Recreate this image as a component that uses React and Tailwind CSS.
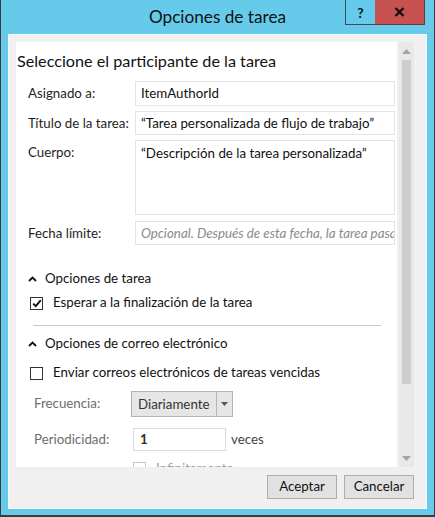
import React from 'react';

const font = { fontFamily: '"Lato", "Noto Sans", sans-serif' };

function Caret() {
  return (
    <svg width="9" height="6" viewBox="0 0 9 6" className="shrink-0">
      <path d="M1 5 L4.5 1.5 L8 5" fill="none" stroke="#111" strokeWidth="1.8" />
    </svg>
  );
}

function Check({ checked, dim }) {
  return (
    <span
      className={`w-[13px] h-[13px] border flex items-center justify-center bg-white shrink-0 ${
        dim ? 'border-[#c8c8c8]' : 'border-[#333333]'
      }`}
    >
      {checked && (
        <svg width="10" height="9" viewBox="0 0 10 9">
          <path d="M1.2 4.6 L3.8 7.2 L8.8 1.2" fill="none" stroke="#111" strokeWidth="1.9" />
        </svg>
      )}
    </span>
  );
}

function Field({ label, children, h = 'h-[25px]' }) {
  return (
    <div className={`flex ${h}`}>
      <div className="w-[119px] pl-[12px] text-[13.3px] text-[#1e1e1e] leading-[25px]">{label}</div>
      {children}
    </div>
  );
}

export default function App() {
  return (
    <div
      className="w-[435px] h-[517px] bg-[#66cbeb] border-x border-b-2 border-[#3c3c3c] flex flex-col relative overflow-hidden"
      style={font}
    >
      {/* title bar */}
      <div className="h-[34px] shrink-0 flex items-center justify-center text-[17.2px] text-[#111] pb-[1px]">
        Opciones de tarea
      </div>
      <div className="absolute top-0 right-[9px] flex">
        <div className="w-[30px] h-[25px] border-l border-b border-[#3a4d57] flex items-center justify-center text-[14px] font-bold text-[#111]">
          ?
        </div>
        <div className="w-[50px] h-[25px] bg-[#c75050] border-b border-r border-[#6e3535] flex items-center justify-center">
          <svg width="11" height="10" viewBox="0 0 11 10">
            <path d="M1.5 1 L9.5 9 M9.5 1 L1.5 9" stroke="#111" strokeWidth="2.4" />
          </svg>
        </div>
      </div>

      {/* dialog body */}
      <div className="mx-[7px] mb-[6px] flex-1 bg-[#f0f0f0] border border-[#fafafa] flex flex-col px-[7px] pt-[7px]">
        <div className="flex h-[425px]">
          <div className="flex-1 bg-white overflow-hidden text-[13.3px]">
            <div className="pl-[1px] pt-[9px] text-[16.2px] text-[#111] leading-[20px]">
              Seleccione el participante de la tarea
            </div>
            <div className="pr-[2px] mt-[10px] flex flex-col gap-[5px]">
              <Field label="Asignado a:">
                <div className="flex-1 border border-[#e3e3e3] px-[5px] leading-[23px] text-[#111]">
                  ItemAuthorId
                </div>
              </Field>
              <Field label="Título de la tarea:" h="h-[24px]">
                <div className="flex-1 border border-[#e3e3e3] px-[5px] leading-[22px] text-[#111] whitespace-nowrap overflow-hidden">
                  “Tarea personalizada de flujo de trabajo”
                </div>
              </Field>
              <Field label="Cuerpo:" h="h-[75px]">
                <div className="flex-1 border border-[#e3e3e3] px-[5px] pt-[1px] leading-[22px] text-[#111] whitespace-nowrap overflow-hidden">
                  “Descripción de la tarea personalizada”
                </div>
              </Field>
              <div className="mt-[1px]">
                <Field label="Fecha límite:" h="h-[24px]">
                  <div className="flex-1 border border-[#e3e3e3] px-[5px] italic leading-[22px] text-[#8a8a8a] whitespace-nowrap overflow-hidden">
                    Opcional. Después de esta fecha, la tarea pasará a estar vencida
                  </div>
                </Field>
              </div>
            </div>

            <div className="mt-[24px] h-[20px] pl-[12px] flex items-center gap-[8px] text-[#111]">
              <Caret />
              <span>Opciones de tarea</span>
            </div>
            <div className="mt-[4px] h-[20px] pl-[14px] flex items-center gap-[10px] text-[#111]">
              <Check checked />
              <span>Esperar a la finalización de la tarea</span>
            </div>
            <div className="ml-[17px] mr-[16px] mt-[12px] border-t border-[#c8c8c8]" />
            <div className="mt-[8px] h-[20px] pl-[12px] flex items-center gap-[8px] text-[#111]">
              <Caret />
              <span>Opciones de correo electrónico</span>
            </div>
            <div className="mt-[9px] h-[20px] pl-[14px] flex items-center gap-[10px] text-[#111]">
              <Check />
              <span>Enviar correos electrónicos de tareas vencidas</span>
            </div>

            <div className="mt-[8px] flex items-center h-[26px]">
              <div className="w-[115px] pl-[18px] text-[#6d6d6d]">Frecuencia:</div>
              <div className="w-[102px] h-[26px] bg-[#e6e6e6] border border-[#b4b4b4] flex">
                <div className="flex-1 text-[#333] leading-[24px] pl-[6px]">Diariamente</div>
                <div className="w-[16px] border-l border-[#b4b4b4] flex items-center justify-center">
                  <svg width="7" height="4" viewBox="0 0 7 4">
                    <path d="M0 0 L7 0 L3.5 4 Z" fill="#555" />
                  </svg>
                </div>
              </div>
            </div>

            <div className="mt-[11px] flex items-center h-[23px]">
              <div className="w-[117px] pl-[18px] text-[#6d6d6d]">Periodicidad:</div>
              <div className="w-[93px] h-[23px] border border-[#dcdcdc] text-[#3b2a12] font-bold leading-[21px] pl-[6px]">
                1
              </div>
              <div className="ml-[5px] text-[#444]">veces</div>
            </div>

            <div className="mt-[10px] flex items-center gap-[10px] pl-[117px] h-[14px]">
              <Check dim />
              <span className="text-[#a0a0a0] leading-[14px]">Infinitamente</span>
            </div>
          </div>

          {/* scrollbar */}
          <div className="w-[15px] bg-[#e8e8e8] flex flex-col items-center ml-[2px]">
            <div className="h-[18px] flex items-center justify-center">
              <svg width="9" height="5" viewBox="0 0 9 5">
                <path d="M0 5 L4.5 0 L9 5 Z" fill="#a3a3a3" />
              </svg>
            </div>
            <div className="w-[9px] h-[324px] bg-[#cdcdcd]" />
            <div className="flex-1" />
            <div className="h-[18px] flex items-center justify-center">
              <svg width="9" height="5" viewBox="0 0 9 5">
                <path d="M0 0 L9 0 L4.5 5 Z" fill="#a3a3a3" />
              </svg>
            </div>
          </div>
          <div className="w-[5px]" />
        </div>

        <div className="flex justify-end gap-[7px] mt-[8px] pr-[5px]">
          <button className="w-[70px] h-[24px] border border-[#adadad] bg-[#e1e1e1] text-[13.3px] text-[#111]">
            Aceptar
          </button>
          <button className="w-[70px] h-[24px] border border-[#adadad] bg-[#e1e1e1] text-[13.3px] text-[#111]">
            Cancelar
          </button>
        </div>
      </div>
    </div>
  );
}
